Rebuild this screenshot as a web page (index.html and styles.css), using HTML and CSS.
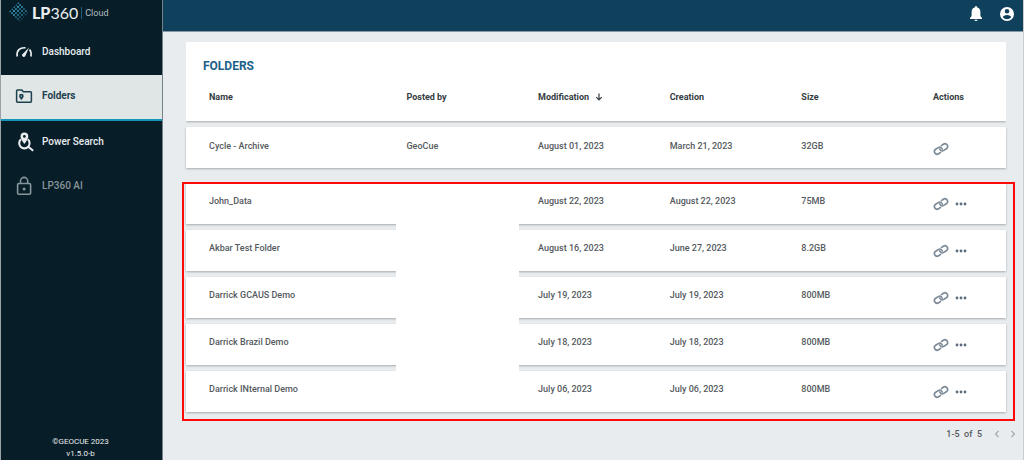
FILE: index.html
```html
<!DOCTYPE html>
<html lang="en">
<head>
<meta charset="utf-8">
<title>LP360 Cloud - Folders</title>
<link rel="stylesheet" href="styles.css">
</head>
<body>
<svg class="sprite" aria-hidden="true">
  <symbol id="link" viewBox="0 0 16 16">
    <g transform="rotate(-33 8 8)" fill="none" stroke="currentColor" stroke-width="1.600">
      <path d="M6.300 10.700H3.400a2.700 2.700 0 0 1 0-5.400h3a2.700 2.700 0 0 1 2.700 2.700q0 .8-.4 1.400"/>
      <path d="M9.700 5.300h2.900a2.700 2.700 0 0 1 0 5.400h-3A2.700 2.700 0 0 1 6.900 8q0-.8.4-1.400"/>
    </g>
  </symbol>
  <symbol id="more" viewBox="0 0 12 4">
    <g fill="currentColor"><circle cx="2" cy="2" r="1.400"/><circle cx="6" cy="2" r="1.400"/><circle cx="10" cy="2" r="1.400"/></g>
  </symbol>
</svg>
<div class="app">
  <aside class="sidebar">
    <a class="brand" href="#">
      <svg class="brand-mark" viewBox="0 0 20 20" aria-hidden="true">
        <defs>
          <pattern id="dots" width="4" height="4" patternUnits="userSpaceOnUse"><circle cx="1" cy="1" r="1.100" fill="#3795b5"/><circle cx="3" cy="3" r="1.100" fill="#2a7c9c"/></pattern>
          <linearGradient id="fade" x1="0" y1="0" x2="1" y2="1"><stop offset=".35" stop-color="#fff"/><stop offset=".8" stop-color="#555"/></linearGradient>
          <mask id="shade"><path d="M10 0 20 10 10 20 0 10z" fill="url(#fade)"/></mask>
        </defs>
        <rect width="20" height="20" fill="url(#dots)" mask="url(#shade)"/>
      </svg>
      <span class="brand-name"><b>LP</b>360</span>
      <span class="brand-sub">Cloud</span>
    </a>
    <nav class="nav">
      <a class="nav-item" href="#">
        <svg class="nav-icon" viewBox="0 0 18 18" aria-hidden="true"><path d="M2.200 13.500C1.200 7.500 5 4.300 10.500 4.800M14.600 6.500c1.300 1.500 1.800 4 1.300 7" fill="none" stroke="currentColor" stroke-width="1.700"/><path d="M14 4.500 10.300 13a1.700 1.700 0 0 1-3.100-1.400z" fill="currentColor"/></svg>
        <span>Dashboard</span>
      </a>
      <a class="nav-item current" href="#" aria-current="page">
        <svg class="nav-icon" viewBox="0 0 18 18" aria-hidden="true"><path d="M2.500 3h4.300l1.500 1.800h7.200q.9 0 .9.900v8.600q0 .9-.9.900H2.500q-.9 0-.9-.9V3.900q0-.9.900-.9z" fill="none" stroke="currentColor" stroke-width="1.500"/><path fill-rule="evenodd" d="M6.400 6.800a2.300 2.300 0 0 1 2.300 2.300c0 1.600-2.300 4-2.300 4s-2.300-2.400-2.300-4a2.300 2.300 0 0 1 2.300-2.300zm0 1.600a.7.700 0 1 0 0 1.400.7.700 0 0 0 0-1.400z" fill="currentColor"/></svg>
        <span>Folders</span>
      </a>
      <a class="nav-item" href="#">
        <svg class="nav-icon large" viewBox="0 0 20 20" aria-hidden="true"><path d="M6 7.200a5.200 5.200 0 1 0 6.800 0M13.300 14.800l4.900 4" fill="none" stroke="currentColor" stroke-width="2.100"/><path fill-rule="evenodd" d="M9.400.500a3.900 3.900 0 0 1 3.900 3.900c0 2.800-3.900 7.400-3.900 7.400S5.500 7.200 5.500 4.400A3.900 3.900 0 0 1 9.400.500zm0 2.500a1.400 1.400 0 1 0 0 2.800 1.400 1.400 0 0 0 0-2.800z" fill="currentColor"/></svg>
        <span>Power Search</span>
      </a>
      <a class="nav-item locked" href="#" aria-disabled="true">
        <svg class="nav-icon large" viewBox="0 0 20 20" aria-hidden="true"><g fill="none" stroke="currentColor" stroke-width="1.600"><rect x="2.600" y="7.500" width="13" height="10.700" rx="1.300"/><path d="M5.500 7.500V5a3.600 3.600 0 0 1 7.200 0v2.500"/></g><circle cx="9.100" cy="12.900" r="1.500" fill="currentColor"/></svg>
        <span>LP360 AI</span>
      </a>
    </nav>
    <footer class="legal">©GEOCUE 2023<br>v1.5.0-b</footer>
  </aside>
  <div class="page">
    <header class="topbar">
      <button class="icon-button" type="button" aria-label="Notifications"><svg viewBox="0 0 14 16" aria-hidden="true"><path d="M7 0q1 0 1 1.300c2.500.6 3.400 2.700 3.400 5V10L13 12v1H1v-1l1.600-2V6.300c0-2.300.9-4.400 3.400-5Q6 0 7 0zM5.400 13.700h3.200a1.600 1.400 0 0 1-3.200 0z" fill="currentColor"/></svg></button>
      <button class="icon-button" type="button" aria-label="Account"><svg viewBox="0 0 16 16" aria-hidden="true"><path fill-rule="evenodd" d="M8 1a7 7 0 1 1 0 14A7 7 0 0 1 8 1zm0 2a2.300 2.300 0 1 0 0 4.600A2.300 2.300 0 0 0 8 3zm0 6c-2.200 0-4.100 1-4.100 2.200a5 5 0 0 0 8.200 0C12.100 10 10.200 9 8 9z" fill="currentColor"/></svg></button>
    </header>
    <main class="content">
      <table class="folders">
        <caption>FOLDERS</caption>
        <thead>
          <tr><th scope="col">Name</th><th scope="col">Posted by</th><th scope="col" aria-sort="descending">Modification <svg class="sort" viewBox="0 0 8 8" aria-hidden="true"><path d="M4 .5v6M1.300 4.200 4 6.900l2.700-2.700" fill="none" stroke="currentColor" stroke-width="1.200"/></svg></th><th scope="col">Creation</th><th scope="col">Size</th><th scope="col">Actions</th></tr>
        </thead>
        <tbody>
          <tr><td>Cycle - Archive</td><td>GeoCue</td><td>August 01, 2023</td><td>March 21, 2023</td><td>32GB</td><td class="actions"><button type="button" aria-label="Copy link"><svg class="link"><use href="#link"/></svg></button></td></tr>
        </tbody>
        <tbody class="highlighted">
          <tr><td>John_Data</td><td class="redacted"></td><td>August 22, 2023</td><td>August 22, 2023</td><td>75MB</td><td class="actions"><button type="button" aria-label="Copy link"><svg class="link"><use href="#link"/></svg></button><button type="button" aria-label="More"><svg class="more"><use href="#more"/></svg></button></td></tr>
          <tr><td>Akbar Test Folder</td><td class="redacted"></td><td>August 16, 2023</td><td>June 27, 2023</td><td>8.2GB</td><td class="actions"><button type="button" aria-label="Copy link"><svg class="link"><use href="#link"/></svg></button><button type="button" aria-label="More"><svg class="more"><use href="#more"/></svg></button></td></tr>
          <tr><td>Darrick GCAUS Demo</td><td class="redacted"></td><td>July 19, 2023</td><td>July 19, 2023</td><td>800MB</td><td class="actions"><button type="button" aria-label="Copy link"><svg class="link"><use href="#link"/></svg></button><button type="button" aria-label="More"><svg class="more"><use href="#more"/></svg></button></td></tr>
          <tr><td>Darrick Brazil Demo</td><td class="redacted"></td><td>July 18, 2023</td><td>July 18, 2023</td><td>800MB</td><td class="actions"><button type="button" aria-label="Copy link"><svg class="link"><use href="#link"/></svg></button><button type="button" aria-label="More"><svg class="more"><use href="#more"/></svg></button></td></tr>
          <tr><td>Darrick INternal Demo</td><td></td><td>July 06, 2023</td><td>July 06, 2023</td><td>800MB</td><td class="actions"><button type="button" aria-label="Copy link"><svg class="link"><use href="#link"/></svg></button><button type="button" aria-label="More"><svg class="more"><use href="#more"/></svg></button></td></tr>
        </tbody>
      </table>
      <div class="pager">
        <span>1-5&nbsp; of &nbsp;5</span>
        <button type="button" aria-label="Previous page"><svg viewBox="0 0 6 8" aria-hidden="true"><path d="M4.500 1 1.500 4l3 3" fill="none" stroke="currentColor" stroke-width="1.100"/></svg></button>
        <button type="button" aria-label="Next page"><svg viewBox="0 0 6 8" aria-hidden="true"><path d="m1.500 1 3 3-3 3" fill="none" stroke="currentColor" stroke-width="1.100"/></svg></button>
      </div>
    </main>
  </div>
</div>
</body>
</html>
```
FILE: styles.css
```css
* { box-sizing: border-box; }
body {
  margin: 0;
  background: #e8ecef;
  color: #555a5e;
  font: 500 9px/12px Roboto, "Liberation Sans", sans-serif;
}
a { color: inherit; text-decoration: none; }
button {
  display: flex;
  padding: 0;
  border: 0;
  background: none;
  color: inherit;
  cursor: pointer;
}
.sprite { position: absolute; width: 0; height: 0; }
.app {
  display: flex;
  min-height: 100vh;
  border-left: 1px solid #9aa3a8;
  border-right: 1px solid #c9cdd0;
}
.sidebar {
  display: flex;
  flex: 0 0 162px;
  flex-direction: column;
  border-right: 1px solid #74828a;
  background: #071d27;
  color: #e9edef;
}
.brand { display: flex; align-items: center; height: 25px; padding-left: 8px; }
.brand-mark { width: 20px; height: 20px; margin-bottom: 2px; }
.brand-name {
  margin-left: 3px;
  padding-right: 3px;
  border-right: 1px solid #1d6078;
  font: 400 16px/12px Lato, sans-serif;
}
.brand-name b { font-weight: 900; }
.brand-sub { margin-left: 3px; color: #b6bfc3; font-size: 9px; font-weight: 400; }
.nav { display: flex; flex-direction: column; font-size: 10px; }
.nav-item {
  display: flex;
  align-items: center;
  gap: 9px;
  height: 44px;
  padding: 0 0 2px 14px;
}
.nav-item:first-child { height: 50px; padding-top: 4px; padding-bottom: 0; }
.nav-item.current {
  height: 46px;
  padding-bottom: 3px;
  border-bottom: 2px solid #1695ba;
  background: #e0e5e5;
  color: #1d404f;
  font-weight: 700;
}
.nav-icon { width: 18px; height: 18px; }
.nav-icon.large { width: 20px; height: 20px; margin-right: -2px; }
.locked { color: #87969c; }
.legal { margin-top: auto; padding-right: 2px; text-align: center; font-size: 8px; font-weight: 400; }
.page { flex: 1; min-width: 0; }
.topbar {
  display: flex;
  align-items: center;
  justify-content: flex-end;
  gap: 15px;
  height: 32px;
  padding: 0 8px 3px;
  border-bottom: 1px solid #8799a5;
  background: #0f415c;
  color: #fff;
}
.icon-button svg { width: 16px; height: 16px; }
.content { padding: 10px 17px 0 23px; }
.folders, .folders thead, .folders tbody { display: block; }
.folders caption {
  display: block;
  padding: 16px 17px 0;
  background: #fff;
  color: #1b6189;
  text-align: left;
  font-size: 12px;
  line-height: 16px;
  font-weight: 700;
}
.folders tr {
  display: grid;
  grid-template-columns: 3fr 2fr 2fr 2fr 2fr 73px;
  height: 41px;
  padding: 13px 0 0 23px;
  background: #fff;
  box-shadow: 0 1px 2px #a7abad;
}
.folders thead tr { height: 47px; padding-top: 17px; clip-path: inset(0 0 -4px); }
.folders th { padding: 0; text-align: left; font-weight: 700; color: #343c42; }
.folders td { padding: 0; }
.sort { width: 8px; height: 8px; margin-left: 4px; vertical-align: -1px; }
.folders tbody { display: grid; gap: 6px; margin-top: 6px; }
.folders tbody.highlighted { position: relative; margin-top: 15px; }
.highlighted tr { padding-top: 12px; }
.highlighted::after {
  content: "";
  position: absolute;
  inset: -1px -9px -9px -4px;
  border: 2px solid #ff0a0a;
  pointer-events: none;
}
.redacted { position: relative; }
.redacted::after {
  content: "";
  position: absolute;
  z-index: 1;
  inset: 0 19px auto -10px;
  height: 44px;
  background: #fff;
}
.folders .actions { display: flex; align-items: center; gap: 6px; height: 18px; color: #7b8996; }
.link { width: 16px; height: 16px; }
.more { width: 12px; height: 4px; color: #5b6d7c; }
.pager {
  display: flex;
  align-items: center;
  justify-content: flex-end;
  gap: 10px;
  margin: 16px -10px 0 0;
}
.pager button { color: #9da6ad; }
.pager span { margin-right: 2px; }
.pager svg { width: 6px; height: 8px; }
```
